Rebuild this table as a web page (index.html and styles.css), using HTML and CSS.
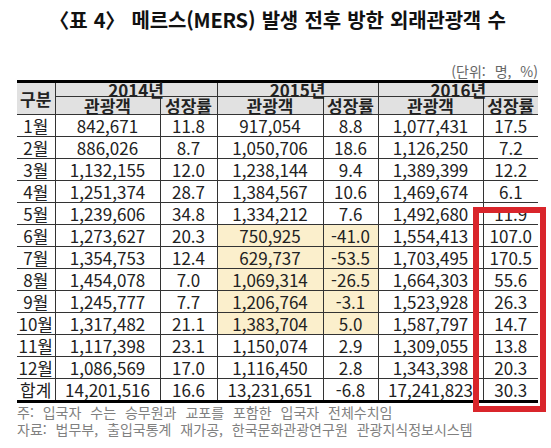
FILE: index.html
```html
<!DOCTYPE html>
<html lang="ko">
<head>
    <meta charset="UTF-8" />
    <meta name="viewport" content="width=device-width, initial-scale=1" />
    <title>메르스 발생 전후 방한 외래관광객 수</title>
    <link rel="stylesheet" href="styles.css">
</head>
<body>
    <div class="page">
        <h1 class="title">〈표 4〉 메르스(MERS) 발생 전후 방한 외래관광객 수</h1>
        <p class="unit">(단위: 명, %)</p>

        <table class="stats">
            <colgroup>
                <col class="c-month" />
                <col class="c-num" />
                <col class="c-rate" />
                <col class="c-num2" />
                <col class="c-rate2" />
                <col class="c-num" />
                <col class="c-rate2" />
            </colgroup>
            <thead>
                <tr class="year-row">
                    <th rowspan="2" class="first">구분</th>
                    <th colspan="2">2014년</th>
                    <th colspan="2">2015년</th>
                    <th colspan="2" class="last">2016년</th>
                </tr>
                <tr class="sub-row">
                    <th>관광객</th>
                    <th>성장률</th>
                    <th>관광객</th>
                    <th>성장률</th>
                    <th>관광객</th>
                    <th class="last">성장률</th>
                </tr>
            </thead>
            <tbody id="rows"></tbody>
        </table>

        <div class="notes">
            <p>주: 입국자 수는 승무원과 교포를 포함한 입국자 전체수치임</p>
            <p>자료: 법무부, 출입국통계 재가공, 한국문화관광연구원 관광지식정보시스템</p>
        </div>

        <div class="red-box"></div>
    </div>

    <script>
        const data = [
            ['1월', '842,671', '11.8', '917,054', '8.8', '1,077,431', '17.5'],
            ['2월', '886,026', '8.7', '1,050,706', '18.6', '1,126,250', '7.2'],
            ['3월', '1,132,155', '12.0', '1,238,144', '9.4', '1,389,399', '12.2'],
            ['4월', '1,251,374', '28.7', '1,384,567', '10.6', '1,469,674', '6.1'],
            ['5월', '1,239,606', '34.8', '1,334,212', '7.6', '1,492,680', '11.9'],
            ['6월', '1,273,627', '20.3', '750,925', '-41.0', '1,554,413', '107.0'],
            ['7월', '1,354,753', '12.4', '629,737', '-53.5', '1,703,495', '170.5'],
            ['8월', '1,454,078', '7.0', '1,069,314', '-26.5', '1,664,303', '55.6'],
            ['9월', '1,245,777', '7.7', '1,206,764', '-3.1', '1,523,928', '26.3'],
            ['10월', '1,317,482', '21.1', '1,383,704', '5.0', '1,587,797', '14.7'],
            ['11월', '1,117,398', '23.1', '1,150,074', '2.9', '1,309,055', '13.8'],
            ['12월', '1,086,569', '17.0', '1,116,450', '2.8', '1,343,398', '20.3'],
            ['합계', '14,201,516', '16.6', '13,231,651', '-6.8', '17,241,823', '30.3']
        ];

        // MERS months: 2015 columns highlighted
        const mers = ['6월', '7월', '8월', '9월', '10월'];

        const tbody = document.getElementById('rows');
        data.forEach(row => {
            const tr = document.createElement('tr');
            row.forEach((val, i) => {
                const td = document.createElement('td');
                td.textContent = val;
                if (i === 0) td.classList.add('first');
                if (i === 6) td.classList.add('last');
                if ((i === 3 || i === 4) && mers.includes(row[0])) td.classList.add('hl');
                tr.appendChild(td);
            });
            tbody.appendChild(tr);
        });
    </script>
</body>
</html>
```

FILE: styles.css
```css
body {
    margin: 0;
    background: #fff;
    color: #222;
    font-family: "Noto Sans CJK KR", "Noto Sans", sans-serif;
}

.page {
    position: relative;
    width: 521px;
    padding: 4px 0 0 17px;
}

.title {
    margin: 0;
    font-size: 20px;
    font-weight: 700;
    line-height: 32px;
    text-align: center;
    word-spacing: 1px;
    letter-spacing: -0.2px;
    color: #111;
}

.unit {
    margin: 27px 0 1px 0;
    font-size: 14px;
    line-height: 16px;
    text-align: right;
    word-spacing: 5px;
    color: #666;
}

/* Table */
.stats {
    width: 521px;
    table-layout: fixed;
    border-collapse: collapse;
    border-top: 3px solid #000;
    border-bottom: 3px solid #000;
}
.c-month { width: 38px; }
.c-num { width: 105px; }
.c-rate { width: 57px; }
.c-num2 { width: 106px; }
.c-rate2 { width: 55px; }

.stats th,
.stats td {
    border: 1px solid #333;
    padding: 0;
    text-align: center;
    font-size: 17px;
    white-space: nowrap;
}
.stats .first { border-left: none; }
.stats .last { border-right: none; }

.stats th {
    background-color: #e1e1e1;
    font-weight: 700;
}
.year-row th {
    height: 13px;
    line-height: 13px;
}
.sub-row th {
    height: 17px;
    line-height: 17px;
}
.stats td {
    height: 21px;
    line-height: 21px;
    overflow: hidden;
}
.stats td.hl {
    background-color: #fbefcc;
}

/* Notes */
.notes {
    margin-top: 1px;
    font-size: 14px;
    color: #808080;
    word-spacing: 5px;
}
.notes p {
    margin: 0;
    line-height: 17px;
}

.red-box {
    position: absolute;
    left: 473px;
    top: 207px;
    width: 61px;
    height: 193px;
    border: 6px solid #d9252b;
}
```
